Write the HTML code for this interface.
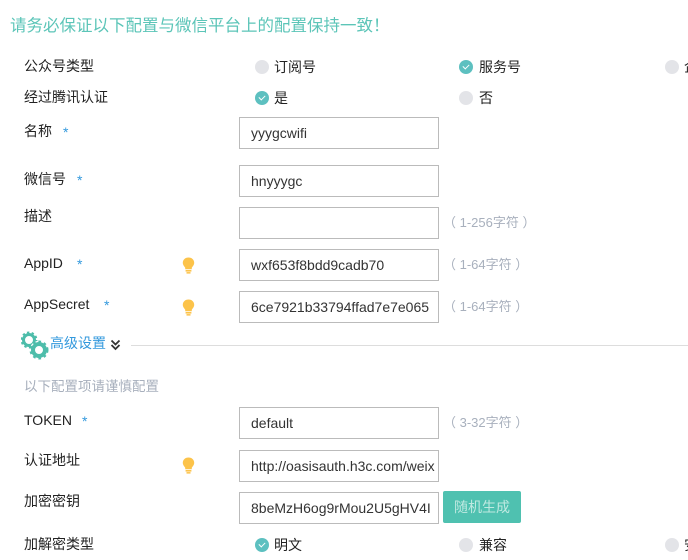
<!DOCTYPE html>
<html><head><meta charset="utf-8"><style>
*{margin:0;padding:0;box-sizing:border-box}
body{width:688px;height:560px;background:#fff;position:relative;overflow:hidden;font-family:"Liberation Sans","Noto Sans CJK SC",sans-serif;font-size:14px;color:#222}
.a{position:absolute;white-space:nowrap;line-height:16px}
.t{left:10px;top:16px;font-size:16.5px;color:#5cc5b8;line-height:20px}
.l{left:24px}
.s{color:#3399dd;font-size:14px;position:absolute;top:1px}
.in{position:absolute;left:239px;width:200px;height:32px;border:1px solid #bbb;padding-left:11px;line-height:30px;font-size:14px;color:#333;overflow:hidden;white-space:nowrap}
.h{left:443px;color:#a8b0bd;font-size:13px}
.r{position:absolute;width:14px;height:14px;border-radius:50%;background:#e3e4e8}
.r.on{background:#5dc0c0}
.r.on:after{content:"";position:absolute;left:4px;top:3.5px;width:5px;height:3px;border-left:1.5px solid #fff;border-bottom:1.5px solid #fff;transform:rotate(-45deg)}
.b{position:absolute;left:182px}
</style></head><body>
<div class="a t">请务必保证以下配置与微信平台上的配置保持一致！</div>

<div class="a l" style="top:58px">公众号类型</div>
<div class="r" style="left:255px;top:60px"></div><div class="a" style="left:274px;top:59px">订阅号</div>
<div class="r on" style="left:459px;top:60px"></div><div class="a" style="left:479px;top:59px">服务号</div>
<div class="r" style="left:665px;top:60px"></div><div class="a" style="left:684px;top:59px">企</div>

<div class="a l" style="top:89px">经过腾讯认证</div>
<div class="r on" style="left:255px;top:91px"></div><div class="a" style="left:274px;top:90px">是</div>
<div class="r" style="left:459px;top:91px"></div><div class="a" style="left:479px;top:90px">否</div>

<div class="a l" style="top:123px">名称<span class="s" style="left:39px">*</span></div>
<div class="in" style="top:117px">yyygcwifi</div>

<div class="a l" style="top:171px">微信号<span class="s" style="left:53px">*</span></div>
<div class="in" style="top:165px">hnyyygc</div>

<div class="a l" style="top:208px">描述</div>
<div class="in" style="top:207px"></div>
<div class="a h" style="top:215px">（ 1-256字符 ）</div>

<svg class="b" style="top:257px" width="13" height="17" viewBox="0 0 13 17"><path d="M6.5 0.5C3 0.5 0.8 3 0.8 5.7c0 2.3 1.6 3.6 2.4 5v1.6h6.6v-1.6c.8-1.4 2.4-2.7 2.4-5C12.2 3 10 0.5 6.5 0.5z" fill="#fcc34a"/><rect x="3.6" y="13" width="5.8" height="1.6" fill="#fcc34a"/><rect x="4.5" y="15.1" width="4" height="1.5" fill="#fcc34a"/></svg>
<div class="a l" style="top:255px">AppID<span class="s" style="left:53px">*</span></div>
<div class="in" style="top:249px">wxf653f8bdd9cadb70</div>
<div class="a h" style="top:257px">（ 1-64字符 ）</div>

<svg class="b" style="top:299px" width="13" height="17" viewBox="0 0 13 17"><path d="M6.5 0.5C3 0.5 0.8 3 0.8 5.7c0 2.3 1.6 3.6 2.4 5v1.6h6.6v-1.6c.8-1.4 2.4-2.7 2.4-5C12.2 3 10 0.5 6.5 0.5z" fill="#fcc34a"/><rect x="3.6" y="13" width="5.8" height="1.6" fill="#fcc34a"/><rect x="4.5" y="15.1" width="4" height="1.5" fill="#fcc34a"/></svg>
<div class="a l" style="top:296px">AppSecret<span class="s" style="left:80px">*</span></div>
<div class="in" style="top:291px">6ce7921b33794ffad7e7e065</div>
<div class="a h" style="top:299px">（ 1-64字符 ）</div>

<svg style="position:absolute;left:21px;top:331px" width="30" height="30" viewBox="0 0 30 30">
<circle cx="8" cy="9" r="5.5" fill="none" stroke="#4dbdaa" stroke-width="3"/>
<circle cx="8" cy="9" r="7.3" fill="none" stroke="#4dbdaa" stroke-width="2.4" stroke-dasharray="2.3 2.3"/>
<circle cx="18" cy="19" r="9.2" fill="#fff"/>
<circle cx="18" cy="19" r="6" fill="none" stroke="#4dbdaa" stroke-width="4"/>
<circle cx="18" cy="19" r="8.2" fill="none" stroke="#4dbdaa" stroke-width="2.6" stroke-dasharray="2.6 2.8"/>
</svg>
<div class="a" style="left:50px;top:335px;color:#3399dd">高级设置</div>
<svg style="position:absolute;left:110px;top:339px" width="11" height="12" viewBox="0 0 11 12"><path d="M1.5 1.5l4 4 4-4M1.5 6l4 4 4-4" fill="none" stroke="#333" stroke-width="1.8"/></svg>
<div style="position:absolute;left:131px;top:345px;width:557px;height:1px;background:#ddd"></div>

<div class="a" style="left:24px;top:379px;color:#a8b0bd;font-size:13.5px">以下配置项请谨慎配置</div>

<div class="a l" style="top:412px">TOKEN<span class="s" style="left:58px">*</span></div>
<div class="in" style="top:407px">default</div>
<div class="a h" style="top:415px">（ 3-32字符 ）</div>

<svg class="b" style="top:457px" width="13" height="17" viewBox="0 0 13 17"><path d="M6.5 0.5C3 0.5 0.8 3 0.8 5.7c0 2.3 1.6 3.6 2.4 5v1.6h6.6v-1.6c.8-1.4 2.4-2.7 2.4-5C12.2 3 10 0.5 6.5 0.5z" fill="#fcc34a"/><rect x="3.6" y="13" width="5.8" height="1.6" fill="#fcc34a"/><rect x="4.5" y="15.1" width="4" height="1.5" fill="#fcc34a"/></svg>
<div class="a l" style="top:452px">认证地址</div>
<div class="in" style="top:450px">http://oasisauth.h3c.com/weix</div>

<div class="a l" style="top:493px">加密密钥</div>
<div class="in" style="top:492px">8beMzH6og9rMou2U5gHV4I</div>
<div style="position:absolute;left:443px;top:491px;width:78px;height:32px;background:#4fc1b0;border-radius:2px;color:#bfe9e1;text-align:center;line-height:32px;font-size:14px">随机生成</div>

<div class="a l" style="top:536px">加解密类型</div>
<div class="r on" style="left:255px;top:538px"></div><div class="a" style="left:274px;top:537px">明文</div>
<div class="r" style="left:459px;top:538px"></div><div class="a" style="left:479px;top:537px">兼容</div>
<div class="r" style="left:665px;top:538px"></div><div class="a" style="left:684px;top:537px">安</div>
</body></html>
